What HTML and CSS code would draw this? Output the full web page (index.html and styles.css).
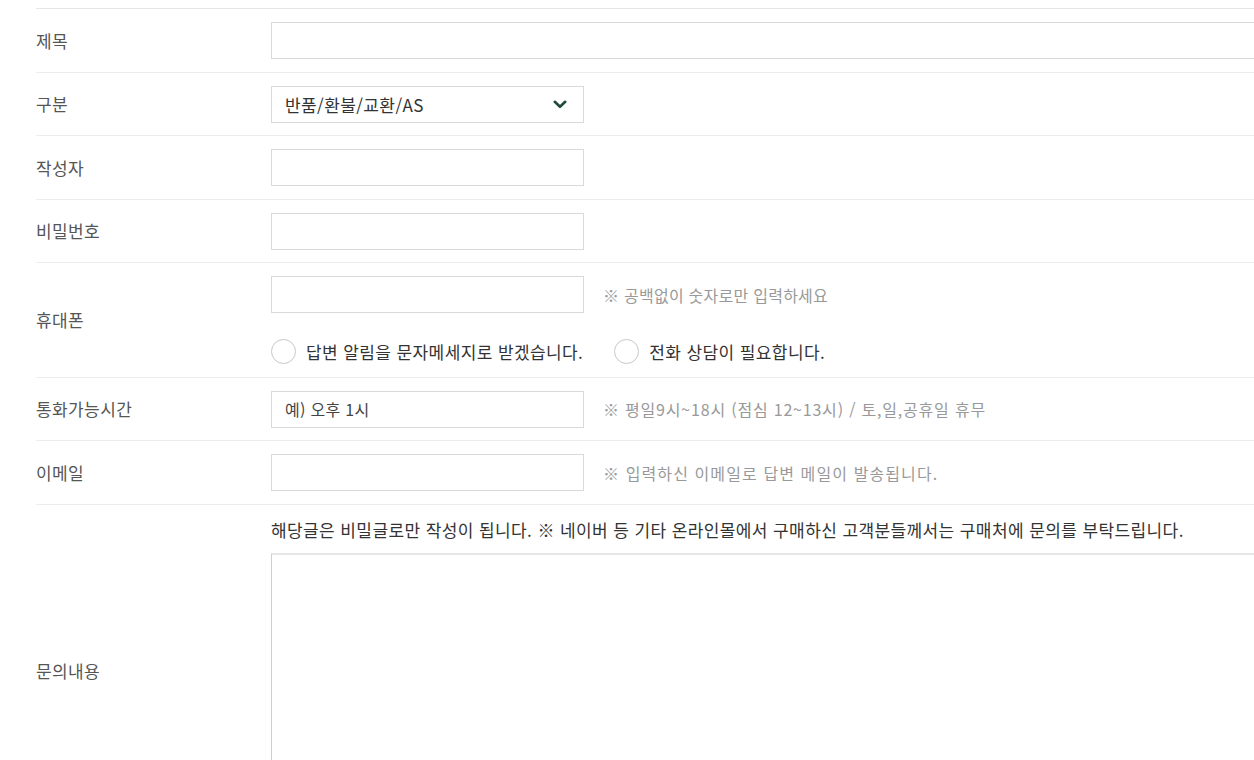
FILE: index.html
```html
<!DOCTYPE html>
<html lang="ko">
<head>
<meta charset="utf-8">
<title>문의하기</title>
<link rel="stylesheet" href="styles.css">
</head>
<body>
<div class="form">
  <div class="row">
    <div class="label">제목</div>
    <div class="field"><input class="input wide" type="text"></div>
  </div>
  <div class="row">
    <div class="label">구분</div>
    <div class="field">
      <div class="select-wrap">
        <select class="input select">
          <option>반품/환불/교환/AS</option>
        </select>
        <svg class="chev" width="14" height="9" viewBox="0 0 14 9"><path d="M1.8 1.8 L7 6.8 L12.2 1.8" fill="none" stroke="#1f4a3a" stroke-width="2.6" stroke-linecap="round" stroke-linejoin="round"/></svg>
      </div>
    </div>
  </div>
  <div class="row">
    <div class="label">작성자</div>
    <div class="field"><input class="input" type="text"></div>
  </div>
  <div class="row">
    <div class="label">비밀번호</div>
    <div class="field"><input class="input" type="password"></div>
  </div>
  <div class="row">
    <div class="label">휴대폰</div>
    <div class="field col">
      <div class="line"><input class="input" type="text"><span class="help">※ 공백없이 숫자로만 입력하세요</span></div>
      <div class="radios">
        <label class="radio"><span class="circle"></span>답변 알림을 문자메세지로 받겠습니다.</label>
        <label class="radio"><span class="circle"></span>전화 상담이 필요합니다.</label>
      </div>
    </div>
  </div>
  <div class="row">
    <div class="label">통화가능시간</div>
    <div class="field line"><input class="input small" type="text" value="예) 오후 1시"><span class="help help-time">※ 평일9시~18시 (점심 12~13시) / 토,일,공휴일 휴무</span></div>
  </div>
  <div class="row">
    <div class="label">이메일</div>
    <div class="field line"><input class="input" type="text"><span class="help help-mail">※ 입력하신 이메일로 답변 메일이 발송됩니다.</span></div>
  </div>
  <div class="row">
    <div class="label">문의내용</div>
    <div class="field col content">
      <p class="notice">해당글은 비밀글로만 작성이 됩니다. ※ 네이버 등 기타 온라인몰에서 구매하신 고객분들께서는 구매처에 문의를 부탁드립니다.</p>
      <textarea class="area"></textarea>
    </div>
  </div>
</div>
</body>
</html>
```
FILE: styles.css
```css
html, body {
  margin: 0;
  padding: 0;
  background: #fff;
  overflow: hidden;
}
body {
  font-family: "Noto Sans CJK KR", "Noto Sans", sans-serif;
  color: #333;
}
.form {
  margin: 8px 0 0 36px;
  width: 1320px;
  border-top: 1px solid #e6e6e6;
}
.row {
  display: grid;
  grid-template-columns: 235px 1fr;
  align-items: center;
  padding: 13px 0 12.5px;
  border-bottom: 1px solid #ededed;
}
.label {
  font-size: 17px;
  letter-spacing: 0.4px;
  color: #555;
  line-height: 24px;
}
.field {
  min-width: 0;
}
.line {
  display: flex;
  align-items: center;
  gap: 19px;
}
.col {
  display: flex;
  flex-direction: column;
}
.input {
  box-sizing: border-box;
  width: 313px;
  height: 37px;
  border: 1px solid #d9d9d9;
  background: #fff;
  padding: 0 13px;
  font-family: inherit;
  font-size: 17px;
  letter-spacing: 0.4px;
  color: #333;
  outline: none;
  margin: 0;
  border-radius: 0;
}
.input.small {
  font-size: 16px;
  letter-spacing: 0.3px;
  color: #444;
}
.input.wide {
  width: 100%;
}
.select-wrap {
  position: relative;
  width: 313px;
}
.select {
  appearance: none;
  -webkit-appearance: none;
  width: 100%;
}
.chev {
  position: absolute;
  top: 14px;
  right: 17px;
  pointer-events: none;
}
.help {
  font-size: 16px;
  letter-spacing: 0.25px;
  color: #999;
  white-space: nowrap;
}
.help-time {
  letter-spacing: 0.8px;
}
.help-mail {
  letter-spacing: 1.1px;
}
.radios {
  display: flex;
  gap: 31px;
  margin-top: 26px;
}
.radio {
  display: flex;
  align-items: center;
  gap: 10px;
  font-size: 17px;
  letter-spacing: 0.4px;
  color: #333;
  line-height: 24px;
}
.circle {
  box-sizing: border-box;
  width: 25px;
  height: 25px;
  border: 1px solid #c8c8c8;
  border-radius: 50%;
  background: #fff;
}
.notice {
  margin: 0 0 11px;
  font-size: 17px;
  letter-spacing: 0.4px;
  line-height: 24px;
  color: #333;
  white-space: nowrap;
}
.area {
  box-sizing: border-box;
  width: 100%;
  height: 272px;
  border: 1px solid #cfcfcf;
  border-top: 2px solid #e6e6e6;
  resize: none;
  margin: 0;
  display: block;
}
```
